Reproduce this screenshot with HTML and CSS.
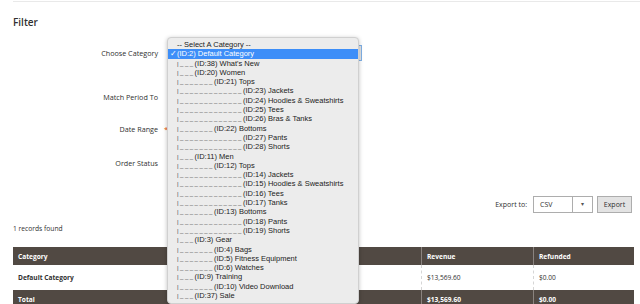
FILE: index.html
```html
<!DOCTYPE html>
<html>
<head>
<meta charset="utf-8">
<link rel="stylesheet" href="styles.css">
</head>
<body>
<div class="page">
  <div class="topline"></div>
  <h2 class="title">Filter</h2>
  <div class="form">
    <div class="row row-cat">
      <label class="lbl">Choose Category</label>
      <div class="field">
        <div class="select-box"></div>
        <ul class="popup">
          <li class="opt top">-- Select A Category --</li>
          <li class="opt sel"><span class="check">✓</span>(ID:2) Default Category</li>
          <li class="opt"><span class="p">|___</span>(ID:38) What's New</li>
          <li class="opt"><span class="p">|___</span>(ID:20) Women</li>
          <li class="opt"><span class="p">|_______</span>(ID:21) Tops</li>
          <li class="opt"><span class="p">|_____________</span>(ID:23) Jackets</li>
          <li class="opt"><span class="p">|_____________</span>(ID:24) Hoodies &amp; Sweatshirts</li>
          <li class="opt"><span class="p">|_____________</span>(ID:25) Tees</li>
          <li class="opt"><span class="p">|_____________</span>(ID:26) Bras &amp; Tanks</li>
          <li class="opt"><span class="p">|_______</span>(ID:22) Bottoms</li>
          <li class="opt"><span class="p">|_____________</span>(ID:27) Pants</li>
          <li class="opt"><span class="p">|_____________</span>(ID:28) Shorts</li>
          <li class="opt"><span class="p">|___</span>(ID:11) Men</li>
          <li class="opt"><span class="p">|_______</span>(ID:12) Tops</li>
          <li class="opt"><span class="p">|_____________</span>(ID:14) Jackets</li>
          <li class="opt"><span class="p">|_____________</span>(ID:15) Hoodies &amp; Sweatshirts</li>
          <li class="opt"><span class="p">|_____________</span>(ID:16) Tees</li>
          <li class="opt"><span class="p">|_____________</span>(ID:17) Tanks</li>
          <li class="opt"><span class="p">|_______</span>(ID:13) Bottoms</li>
          <li class="opt"><span class="p">|_____________</span>(ID:18) Pants</li>
          <li class="opt"><span class="p">|_____________</span>(ID:19) Shorts</li>
          <li class="opt"><span class="p">|___</span>(ID:3) Gear</li>
          <li class="opt"><span class="p">|_______</span>(ID:4) Bags</li>
          <li class="opt"><span class="p">|_______</span>(ID:5) Fitness Equipment</li>
          <li class="opt"><span class="p">|_______</span>(ID:6) Watches</li>
          <li class="opt"><span class="p">|___</span>(ID:9) Training</li>
          <li class="opt"><span class="p">|_______</span>(ID:10) Video Download</li>
          <li class="opt"><span class="p">|___</span>(ID:37) Sale</li>
        </ul>
      </div>
    </div>
    <div class="row row-period">
      <label class="lbl">Match Period To</label>
      <div class="field"></div>
    </div>
    <div class="row row-date">
      <label class="lbl">Date Range</label>
      <span class="req">*</span>
      <div class="field"></div>
    </div>
    <div class="row row-status">
      <label class="lbl">Order Status</label>
      <div class="field"></div>
    </div>
  </div>
  <div class="export">
    <span class="export-label">Export to:</span>
    <div class="csv"><span class="csv-val">CSV</span><span class="csv-arrow">▾</span></div>
    <button class="btn">Export</button>
  </div>
  <div class="found">1 records found</div>
  <table class="grid">
    <thead>
      <tr><th class="c1">Category</th><th class="c2">Revenue</th><th class="c3">Refunded</th></tr>
    </thead>
    <tbody>
      <tr class="body-row"><td class="c1 strong">Default Category</td><td class="c2">$13,569.60</td><td class="c3">$0.00</td></tr>
    </tbody>
    <tfoot>
      <tr><th class="c1">Total</th><th class="c2">$13,569.60</th><th class="c3">$0.00</th></tr>
    </tfoot>
  </table>
</div>
</body>
</html>
```
FILE: styles.css
```css
html, body {
  margin: 0;
  padding: 0;
  background: #fff;
}
body {
  font-family: "Open Sans", "Liberation Sans", sans-serif;
  color: #303030;
}
.page {
  padding: 0 8px 0 13px;
}
.topline {
  margin-top: 1px;
  border-top: 1px solid #e9e9e9;
  margin-right: -8px;
}
.title {
  margin: 13px 0 0 0;
  font-size: 10px;
  line-height: 14px;
  font-weight: 600;
  color: #303030;
}
.form {
  margin-top: 16px;
}
.row {
  display: flex;
  align-items: center;
  height: 16px;
  position: relative;
}
.row-period { margin-top: 28px; }
.row-date { margin-top: 16px; }
.row-status { margin-top: 18px; }
.lbl {
  width: 145px;
  text-align: right;
  font-size: 7.2px;
  font-weight: 400;
  color: #303030;
  line-height: 16px;
}
.req {
  position: absolute;
  left: 151px;
  top: 4px;
  color: #eb5202;
  font-size: 8px;
  line-height: 8px;
}
.field {
  margin-left: 9px;
  position: relative;
  height: 16px;
  width: 195px;
}
.select-box {
  height: 14px;
  border: 1px solid #7fb0e6;
  background: #e4e4e4;
  box-sizing: content-box;
  width: 193px;
}
.popup {
  position: absolute;
  left: 0;
  top: -8px;
  width: 190px;
  margin: 0;
  padding: 2px 0 2px 0;
  height: 261px;
  list-style: none;
  background: #ececec;
  border: 1px solid #d0d0d0;
  border-radius: 4px;
  box-shadow: 0 1px 4px rgba(0,0,0,0.25);
  font-family: "Liberation Sans", Arial, sans-serif;
  font-size: 7.5px;
  color: #222;
  z-index: 5;
}
.opt {
  height: 9.3px;
  line-height: 9.3px;
  padding-left: 9px;
  white-space: nowrap;
  position: relative;
}
.opt.sel {
  background: #3d8ef8;
  color: #fff;
}
.check {
  position: absolute;
  left: 2px;
  top: 0;
}
.p {
  font-size: 6px;
  letter-spacing: 1.5px;
  color: #444;
}
.export {
  margin-top: 25px;
  display: flex;
  justify-content: flex-end;
  align-items: center;
  height: 17px;
}
.export-label {
  font-size: 7px;
  color: #303030;
  margin-right: 6px;
}
.csv {
  width: 58px;
  height: 15px;
  border: 1px solid #adadad;
  display: flex;
  align-items: center;
  font-size: 7px;
  background: #fff;
}
.csv-val {
  flex: 1;
  padding-left: 6px;
}
.csv-arrow {
  width: 19px;
  height: 15px;
  border-left: 1px solid #adadad;
  text-align: center;
  line-height: 15px;
  font-size: 6px;
  color: #555;
}
.btn {
  margin-left: 4px;
  width: 35px;
  height: 17px;
  padding: 0;
  border: 1px solid #adadad;
  background: #e3e3e3;
  font-family: "Open Sans", sans-serif;
  font-size: 7px;
  color: #303030;
}
.found {
  margin-top: 10px;
  font-size: 6.7px;
  line-height: 12px;
  color: #303030;
}
.grid {
  margin-top: 12px;
  width: 619px;
  border-collapse: collapse;
  table-layout: fixed;
  font-size: 6.6px;
}
.c1 { width: 398px; }
.c2 { width: 101px; }
.c3 { width: 90px; }
thead th, tfoot th {
  background: #514943;
  color: #fff;
  font-weight: 700;
  text-align: left;
  height: 18px;
  padding: 0 5px;
  border-left: 1px solid #8a837f;
}
thead th.c1, tfoot th.c1 { border-left: none; }
.body-row td {
  height: 25px;
  padding: 0 5px;
  border-left: 1px dashed #d6d6d6;
  color: #303030;
  background: #fff;
}
.body-row td.c1 { border-left: none; }
.strong { font-weight: 700; }
```
